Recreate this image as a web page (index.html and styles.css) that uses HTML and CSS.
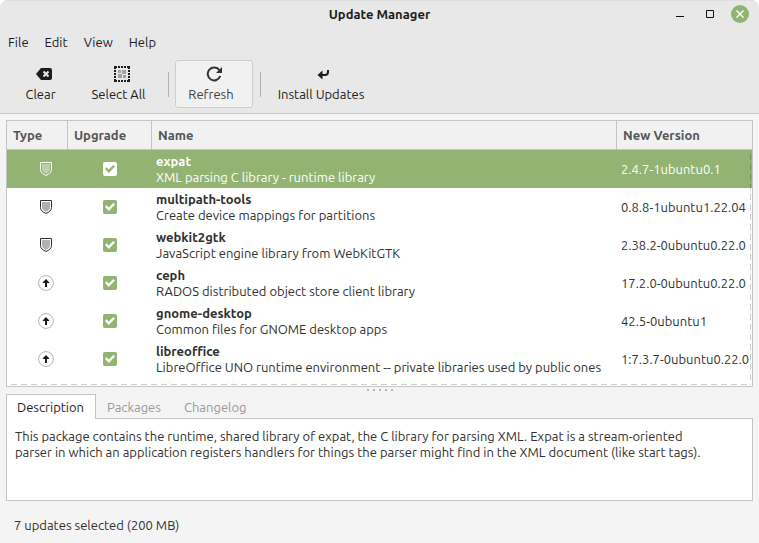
FILE: index.html
```html
<!DOCTYPE html>
<html lang="en">
<head>
<meta charset="utf-8">
<title>Update Manager</title>
<link rel="stylesheet" href="styles.css">
</head>
<body>
<svg class="symbols" aria-hidden="true">
  <symbol id="shield" viewBox="0 0 12 14">
    <path d="M.5 .5h11v7.2c0 2.7-2.6 4.7-5.500 5.700C3.100 12.400.5 10.400.5 7.700z" fill="none" stroke="currentColor"/>
    <path d="M2 2h8v5.600c0 1.900-1.800 3.300-4 4.200-2.200-.9-4-2.300-4-4.200z" fill="currentColor" opacity=".38"/>
  </symbol>
  <symbol id="arrow-up" viewBox="0 0 16 16">
    <circle cx="8" cy="8" r="7.400" fill="none" stroke="#b3b3b3"/>
    <path d="M8 4l3.200 3.200V8H9v4H7V8H4.800v-.8z" fill="#1c1c1c"/>
  </symbol>
</svg>
<div class="window">
  <header class="chrome">
    <div class="titlebar">
      <h1>Update Manager</h1>
      <div class="controls">
        <button type="button" aria-label="Minimize"><svg width="18" height="18"><path d="M5 11.500h8" stroke="#111"/></svg></button>
        <button type="button" aria-label="Maximize"><svg width="18" height="18"><path d="M5.500 5.500h7v7h-7z" fill="none" stroke="#111"/></svg></button>
        <button type="button" class="close" aria-label="Close"><svg width="18" height="18"><path d="M5.500 5.500l7 7M12.500 5.500l-7 7" stroke="#fff" stroke-width="1.400"/></svg></button>
      </div>
    </div>
    <nav class="menu">
      <button type="button">File</button><button type="button">Edit</button><button type="button">View</button><button type="button">Help</button>
    </nav>
    <div class="toolbar">
      <button type="button" class="tool clear"><svg width="16" height="16"><path d="M5 2h9a2 2 0 0 1 2 2v8a2 2 0 0 1-2 2H5L0 8z" fill="#1c1c1c"/><path d="M7.500 5.500l5 5M12.500 5.500l-5 5" stroke="#e8e8e8" stroke-width="2"/></svg><span>Clear</span></button>
      <button type="button" class="tool select-all"><svg width="16" height="16"><path d="M0 1h16M0 15h16M1 0v16M15 0v16" stroke="#1c1c1c" stroke-width="2" stroke-dasharray="3 1 2 1 2 1 2 1 3 1" fill="none"/><path d="M4 4h3v3H4zM8 4h4v4H8zM4 8h4v4H4zM9 9h3v3H9z" fill="#a2a2a2"/></svg><span>Select All</span></button>
      <i class="separator"></i>
      <button type="button" class="tool refresh"><svg width="16" height="16"><path d="M13.300 4.200A6.400 6.400 0 1 0 14.200 10" fill="none" stroke="#333" stroke-width="2"/><path d="M16 1v6h-6z" fill="#333"/></svg><span>Refresh</span></button>
      <i class="separator"></i>
      <button type="button" class="tool install"><svg width="16" height="16"><path d="M12 4v2a3 3 0 0 1-3 3H5" fill="none" stroke="#1c1c1c" stroke-width="2"/><path d="M1.500 9L6.500 4.500v9z" fill="#1c1c1c"/></svg><span>Install Updates</span></button>
    </div>
  </header>
  <main>
    <div class="list">
      <table>
        <colgroup><col class="c-type"><col class="c-upgrade"><col><col class="c-version"></colgroup>
        <thead><tr><th>Type</th><th>Upgrade</th><th>Name</th><th>New Version</th></tr></thead>
        <tbody>
          <tr class="selected"><td><svg class="shield"><use href="#shield"/></svg></td><td><input type="checkbox" checked aria-label="Upgrade expat"></td><td><strong>expat</strong><span>XML parsing C library - runtime library</span></td><td>2.4.7-1ubuntu0.1</td></tr>
          <tr><td><svg class="shield"><use href="#shield"/></svg></td><td><input type="checkbox" checked aria-label="Upgrade multipath-tools"></td><td><strong>multipath-tools</strong><span>Create device mappings for partitions</span></td><td>0.8.8-1ubuntu1.22.04</td></tr>
          <tr><td><svg class="shield"><use href="#shield"/></svg></td><td><input type="checkbox" checked aria-label="Upgrade webkit2gtk"></td><td><strong>webkit2gtk</strong><span>JavaScript engine library from WebKitGTK</span></td><td>2.38.2-0ubuntu0.22.0</td></tr>
          <tr><td><svg class="arrow"><use href="#arrow-up"/></svg></td><td><input type="checkbox" checked aria-label="Upgrade ceph"></td><td><strong>ceph</strong><span>RADOS distributed object store client library</span></td><td>17.2.0-0ubuntu0.22.0</td></tr>
          <tr><td><svg class="arrow"><use href="#arrow-up"/></svg></td><td><input type="checkbox" checked aria-label="Upgrade gnome-desktop"></td><td><strong>gnome-desktop</strong><span>Common files for GNOME desktop apps</span></td><td>42.5-0ubuntu1</td></tr>
          <tr><td><svg class="arrow"><use href="#arrow-up"/></svg></td><td><input type="checkbox" checked aria-label="Upgrade libreoffice"></td><td><strong>libreoffice</strong><span>LibreOffice UNO runtime environment -- private libraries used by public ones</span></td><td>1:7.3.7-0ubuntu0.22.0</td></tr>
        </tbody>
      </table>
    </div>
    <div class="grip"><i></i><i></i><i></i><i></i><i></i></div>
    <section class="details">
      <div class="tabs" role="tablist">
        <button type="button" role="tab" aria-selected="true">Description</button><button type="button" role="tab" aria-selected="false">Packages</button><button type="button" role="tab" aria-selected="false">Changelog</button>
      </div>
      <div class="panel" role="tabpanel">This package contains the runtime, shared library of expat, the C library for parsing XML. Expat is a stream-oriented parser in which an application registers handlers for things the parser might find in the XML document (like start tags).</div>
    </section>
  </main>
  <footer>7 updates selected (200 MB)</footer>
</div>
</body>
</html>
```
FILE: styles.css
```css
* { box-sizing: border-box; }
body { margin: 0; background: #fff; color: #303030; font: 13px/16px "Ubuntu", "Noto Sans", sans-serif; }
button { margin: 0; padding: 0; border: 0; background: none; color: inherit; font: inherit; }
svg { display: block; }
.symbols { position: absolute; width: 0; height: 0; }
.window { display: flex; flex-direction: column; height: 100vh; overflow: hidden; border-radius: 8px 8px 0 0; background: #f4f4f4; }
.chrome { background: #e8e8e8; border-bottom: 1px solid #c8c8c8; border-top: 1px solid #dedede; color: #1c1c1c; }
.titlebar { display: grid; grid-template-columns: 1fr auto 1fr; align-items: center; height: 26px; }
h1 { grid-column: 2; margin: 0; font-size: 13px; font-weight: 600; }
.controls { display: flex; justify-content: flex-end; gap: 12px; padding-right: 10px; }
.close { border-radius: 50%; background: #92b372; }
.menu { display: flex; gap: 16px; height: 29px; padding: 0 8px; align-items: center; }
.toolbar { display: flex; align-items: center; height: 57px; padding: 0 5px 1px; }
.tool { display: flex; flex-direction: column; align-items: center; gap: 4px; height: 48px; padding: 5px 0 0; border: 1px solid transparent; border-radius: 3px; white-space: nowrap; }
.tool span { padding-right: 6px; }
.clear { width: 77px; }
.select-all { width: 79px; }
.refresh { width: 78px; color: #404040; background: #f1f1f1; border-color: #cecece; }
.install { width: 114px; }
.separator { width: 1px; height: 25px; margin: 0 6px 0 7px; background: #b2b2b2; }
main { display: flex; flex: 1; flex-direction: column; min-height: 0; padding: 6px 6px 0; }
.list { position: relative; flex: 1; min-height: 0; overflow: hidden; border: 1px solid #c4c4c4; background: #fff; }
.list::after {
  content: ""; position: absolute; inset: 29px 1px 1px 0; pointer-events: none;
  background:
    repeating-linear-gradient(90deg, transparent 0 4px, rgba(0, 0, 0, .2) 4px 10px) left bottom / 100% 1px no-repeat,
    repeating-linear-gradient(transparent 0 4px, rgba(0, 0, 0, .2) 4px 10px) right top / 1px 100% no-repeat;
}
table { width: 100%; table-layout: fixed; border-collapse: separate; border-spacing: 0; }
.c-type { width: 61px; }
.c-upgrade { width: 84px; }
.c-version { width: 135px; }
th { height: 29px; padding: 0 6px; border-right: 1px solid #c4c4c4; border-bottom: 1px solid #c4c4c4; background: #f1f1f1; color: #555; text-align: left; }
th:last-child { border-right: 0; }
td { height: 38px; padding: 3px 4px; overflow: hidden; white-space: nowrap; }
td strong, td span { display: block; }
td svg { margin: 0 auto; }
td:first-child { padding-left: 21px; }
.shield { width: 12px; height: 14px; }
.arrow { width: 16px; height: 16px; }
.selected { background: #92b372; color: #fff; }
input { display: grid; place-items: center; appearance: none; width: 14px; height: 14px; margin: 0 auto; border-radius: 2px; background: #92b372; color: #fff; }
input::before { content: ""; width: 10px; height: 8px; background: currentColor; clip-path: polygon(0 50%, 16% 28%, 38% 56%, 82% 0, 100% 20%, 38% 100%); }
.selected input { background: #fff; color: #92b372; }
.grip { display: flex; justify-content: center; gap: 4px; height: 7px; padding-top: 2px; }
.grip i { width: 2px; height: 2px; background: #b5b5b5; }
.tabs { display: flex; height: 24px; }
.tabs button { padding: 0 11px 0 10px; border: 1px solid transparent; border-bottom: 0; color: #999; }
.tabs [aria-selected="true"] { position: relative; height: 25px; border-color: #c4c4c4; background: #fff; color: #1c1c1c; }
.panel { min-height: 83px; padding: 9px 40px 9px 8px; border: 1px solid #c4c4c4; background: #fff; }
footer { padding: 16px 14px 10px; }
```
